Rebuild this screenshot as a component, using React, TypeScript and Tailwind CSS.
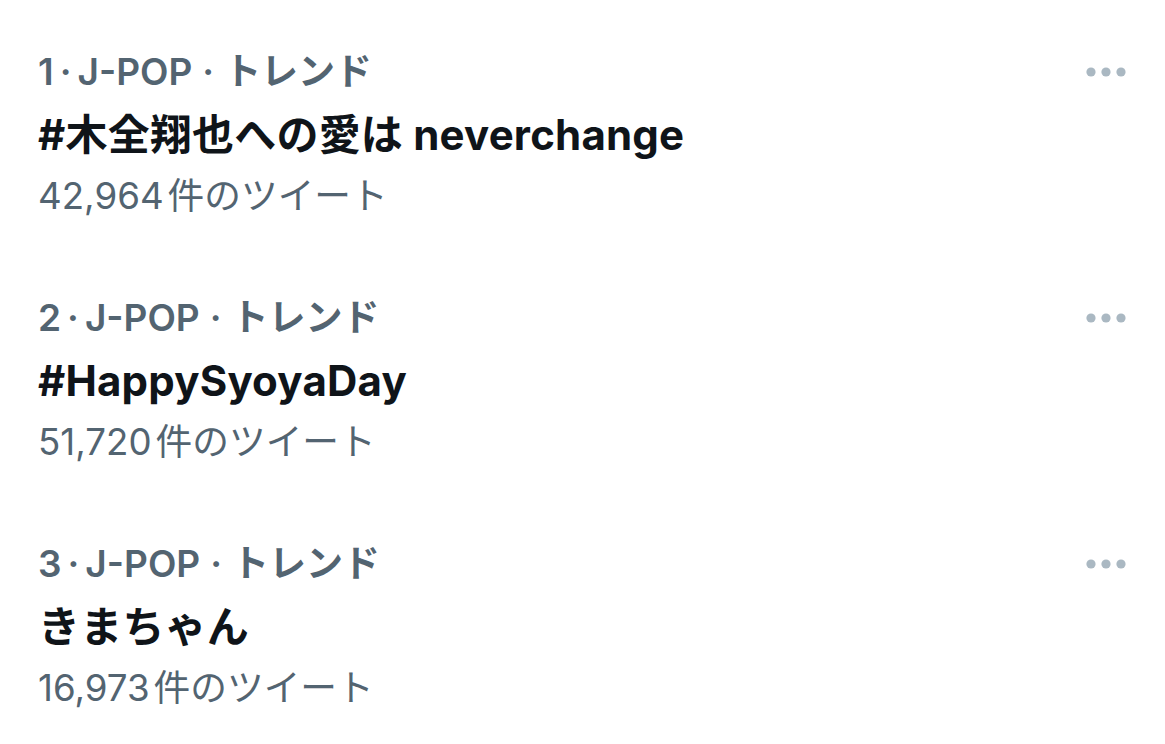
interface Trend {
  rank: number;
  category: string;
  title: string;
  count: string;
}

const trends: Trend[] = [
  { rank: 1, category: 'J-POP', title: '#木全翔也への愛は neverchange', count: '42,964' },
  { rank: 2, category: 'J-POP', title: '#HappySyoyaDay', count: '51,720' },
  { rank: 3, category: 'J-POP', title: 'きまちゃん', count: '16,973' },
];

function MoreDots() {
  return (
    <svg width="44" height="12" viewBox="0 0 44 12" fill="#aab8c2">
      <circle cx="7" cy="6" r="4.6" />
      <circle cx="22" cy="6" r="4.6" />
      <circle cx="37" cy="6" r="4.6" />
    </svg>
  );
}

function TrendRow({ trend }: { trend: Trend }) {
  return (
    <div className="flex items-start justify-between h-[246px]">
      <div className="flex flex-col">
        <div className="h-[62px] flex items-center text-[37px] font-semibold text-[#536471]">
          <span>{trend.rank}</span>
          <span className="mx-[6px]">·</span>
          <span>{trend.category}</span>
          <span className="mx-[10px]">·</span>
          <span>トレンド</span>
        </div>
        <div className="h-[62px] flex items-center text-[42px] font-bold text-[#0f1419] tracking-[0.2px]">
          {trend.title}
        </div>
        <div className="h-[62px] flex items-center text-[36.7px] text-[#536471]">
          <span>{trend.count}</span>
          <span className="ml-[4px]">件のツイート</span>
        </div>
      </div>
      <div className="h-[62px] flex items-center pr-[1px]">
        <MoreDots />
      </div>
    </div>
  );
}

export default function App() {
  return (
    <div
      className="w-[1165px] h-[744px] bg-white overflow-hidden pl-[38px] pr-[36px] pt-[41px]"
      style={{ fontFamily: 'Inter, "Noto Sans CJK JP", sans-serif' }}
    >
      {trends.map((t) => (
        <TrendRow key={t.rank} trend={t} />
      ))}
    </div>
  );
}
